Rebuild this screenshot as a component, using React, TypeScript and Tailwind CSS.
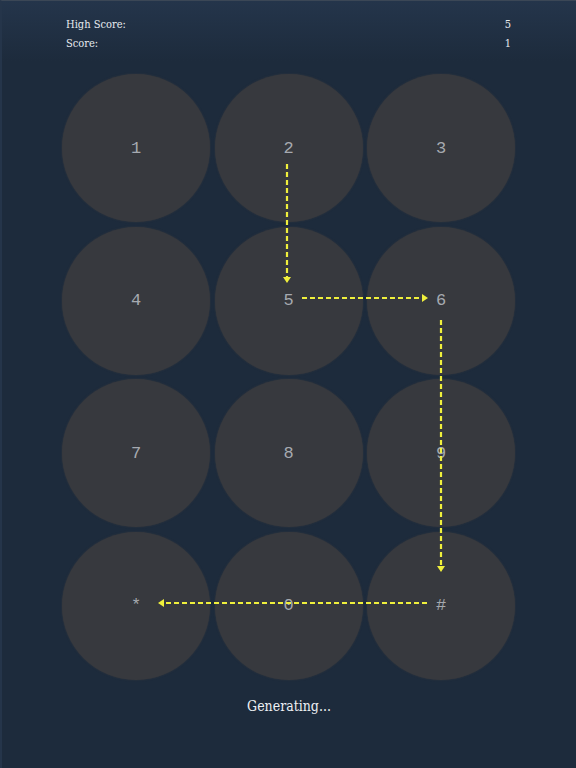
const keys = ["1", "2", "3", "4", "5", "6", "7", "8", "9", "*", "0", "#"];

type Arrow = { x1: number; y1: number; x2: number; y2: number };

// dashed path segments between keys, drawn in page coordinates
const arrows: Arrow[] = [
  { x1: 287, y1: 164, x2: 287, y2: 283 },
  { x1: 302, y1: 298, x2: 428, y2: 298 },
  { x1: 441, y1: 320, x2: 441, y2: 572 },
  { x1: 427, y1: 603, x2: 158, y2: 603 },
];

const ArrowLine = ({ a }: { a: Arrow }) => {
  const dx = Math.sign(a.x2 - a.x1);
  const dy = Math.sign(a.y2 - a.y1);
  const len = 6;
  const w = 4;
  const bx = a.x2 - dx * len;
  const by = a.y2 - dy * len;
  const head = `${a.x2},${a.y2} ${bx + dy * w},${by + dx * w} ${bx - dy * w},${by - dx * w}`;
  return (
    <g>
      <line x1={a.x1} y1={a.y1} x2={bx} y2={by} stroke="#f0f03c" strokeWidth={2.2} strokeDasharray="5 3" />
      <polygon points={head} fill="#f0f03c" />
    </g>
  );
};

const App = () => {
  return (
    <div className="relative w-[576px] h-[768px] overflow-hidden bg-[#1d2b3c] border-t border-t-[#3b4756] border-l-2 border-l-[#25354a] flex flex-col"
      style={{ fontFamily: '"DejaVu Serif Condensed", "DejaVu Serif", "Liberation Serif", serif' }}>
      <div className="bg-linear-to-b from-[#24354b] to-[#1d2b3c] h-[60px] pt-[14px] pl-[64px] pr-[65px] text-[11px] text-[#e8ecf0]">
        <div className="flex justify-between leading-[19px]">
          <span>High Score:</span>
          <span>5</span>
        </div>
        <div className="flex justify-between leading-[19px]">
          <span>Score:</span>
          <span>1</span>
        </div>
      </div>

      <div className="ml-[60px] mt-[13px] grid grid-cols-[148px_148px_148px] gap-[4.5px]">
        {keys.map((k) => (
          <div key={k}
            className="w-[148px] h-[148px] rounded-full bg-[#37393e] shadow-[0_0_2px_#37393e] flex items-center justify-center pt-px text-[17px] text-[#a6aab0]"
            style={{ fontFamily: '"Liberation Mono", "DejaVu Sans Mono", monospace' }}>
            {k}
          </div>
        ))}
      </div>

      <p className="mt-[16px] text-center text-[14px] text-[#eef1f4]">Generating...</p>

      <svg className="absolute -top-px -left-[2px] pointer-events-none" width={576} height={768}>
        {arrows.map((a, i) => (
          <ArrowLine key={i} a={a} />
        ))}
      </svg>
    </div>
  );
};

export default App;
